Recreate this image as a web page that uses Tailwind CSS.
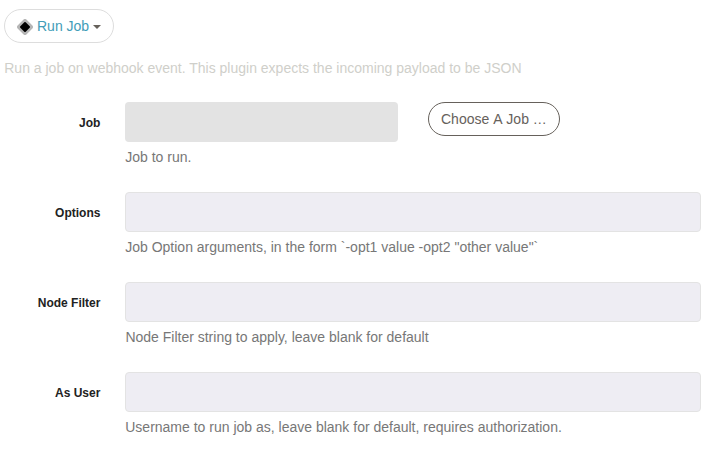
<!DOCTYPE html>
<html lang="en"><head><meta charset="utf-8"><title>Run Job</title>
<script src="https://cdn.jsdelivr.net/npm/@tailwindcss/browser@4"></script></head>
<body class="bg-white text-[14px] leading-5 text-[#777] font-['Liberation_Sans',Arial,sans-serif] overflow-hidden">
<main class="pt-[9px] pl-1 pr-[7px]">
<button class="flex items-center h-[34px] w-[110px] rounded-full border border-[#ddd] pl-3 text-[#429cb8]">
<svg class="w-4 h-4 mr-1 mt-0.5" viewBox="0 0 16 16"><path d="M8 2 14 8 8 14 2 8Z" fill="#b5b5b5" stroke="#b5b5b5" stroke-width="4" stroke-linejoin="round"/><path d="M8 4 12 8 8 12 4 8Z" fill="#000" stroke="#000" stroke-width="2" stroke-linejoin="round"/></svg>
<span>Run Job</span><span class="ml-1 mt-0.5 border-x-4 border-x-transparent border-t-4 border-t-[#66615b]"></span></button>
<p class="mt-[15px] pl-[0.25px] text-[#cfcfca]">Run a job on webhook event. This plugin expects the incoming payload to be JSON</p>
<form class="mt-6 grid grid-cols-[96.4px_1fr] gap-x-[24.6px]">
<label class="h-[90px] pt-[11px] text-right text-[12px] font-bold text-[#222]">Job</label>
<div class="h-[90px]"><div class="flex items-start gap-[30px]"><div class="w-[273px] h-10 rounded bg-[#e3e3e3]"></div><button type="button" class="h-[34px] w-[132px] rounded-full border border-[#66615b] text-[#66615b] pl-3 text-left whitespace-nowrap [font-kerning:none]">Choose A Job …</button></div><p class="mt-[5px] pl-[0.25px]">Job to run.</p></div>
<label class="h-[90px] pt-[11px] text-right text-[12px] font-bold text-[#222]">Options</label>
<div class="h-[90px]"><div class="h-10 rounded bg-[#eeedf3] border border-[#e3e3e3]"></div><p class="mt-[5px] pl-[0.25px]">Job Option arguments, in the form `-opt1 value -opt2 "other value"`</p></div>
<label class="h-[90px] pt-[11px] text-right text-[12px] font-bold text-[#222]">Node Filter</label>
<div class="h-[90px]"><div class="h-10 rounded bg-[#eeedf3] border border-[#e3e3e3]"></div><p class="mt-[5px] pl-[0.4px]">Node Filter string to apply, leave blank for default</p></div>
<label class="h-[90px] pt-[11px] text-right text-[12px] font-bold text-[#222]">As User</label>
<div class="h-[90px]"><div class="h-10 rounded bg-[#eeedf3] border border-[#e3e3e3]"></div><p class="mt-[5px] pl-[0.25px]">Username to run job as, leave blank for default, requires authorization.</p></div>
</form></main></body></html>
